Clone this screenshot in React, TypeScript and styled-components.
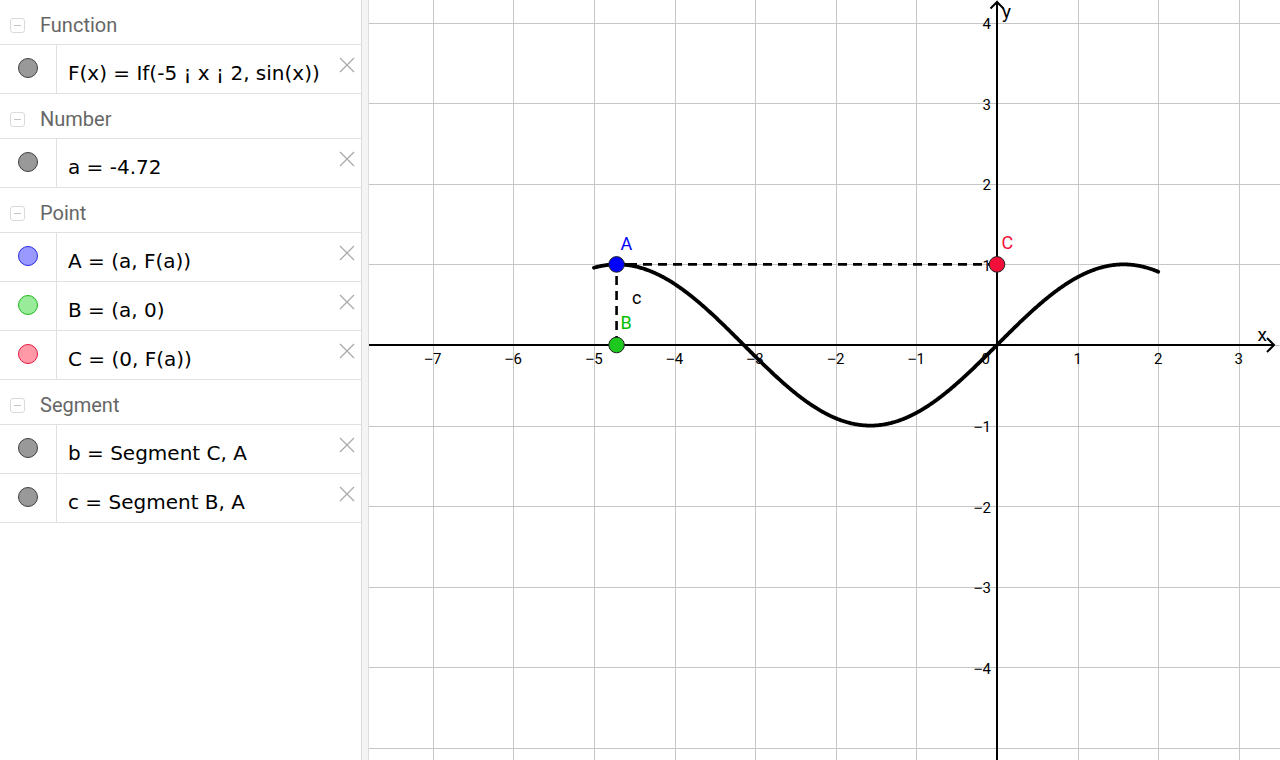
import React from "react";
import styled, { createGlobalStyle } from "styled-components";

const GlobalStyle = createGlobalStyle`
  *, *::before, *::after { box-sizing: border-box; }
  html, body { margin: 0; padding: 0; background: #fff; overflow: hidden; }
  body { font-family: Roboto, "Liberation Sans", sans-serif; }
`;

const Page = styled.div`
  display: flex;
  width: 1280px;
  height: 760px;
  background: #fff;
`;

const AlgebraPanel = styled.div`
  flex: 0 0 361px;
  display: flex;
  flex-direction: column;
  background: #fff;
`;

const Splitter = styled.div`
  flex: 0 0 8px;
  background: #f4f4f4;
  border-left: 1px solid #dcdcdc;
  border-right: 1px solid #dcdcdc;
`;

const GraphicsView = styled.div`
  flex: 1;
  overflow: hidden;
  background: #fff;
`;

const GroupHeader = styled.div`
  height: 45px;
  border-bottom: 1px solid #e0e0e0;
  display: flex;
  align-items: center;
  padding: 6px 0 0 10px;
`;

const CollapseIcon = styled.span`
  position: relative;
  width: 15px;
  height: 15px;
  border: 1px solid #dadada;
  border-radius: 3px;
  margin-right: 15px;
  &::after {
    content: "";
    position: absolute;
    left: 3px;
    right: 3px;
    top: 6px;
    height: 1.5px;
    background: #c4c4c4;
  }
`;

const GroupLabel = styled.span`
  font-family: Roboto, "Liberation Sans", sans-serif;
  font-size: 20px;
  line-height: 24px;
  color: #666;
`;

const ItemRow = styled.div`
  height: 49px;
  border-bottom: 1px solid #e0e0e0;
  display: flex;
`;

const MarbleCell = styled.div`
  flex: 0 0 57px;
  border-right: 1px solid #e0e0e0;
  padding: 13px 0 0 18px;
`;

const Marble = styled.div<{ $fill: string; $stroke: string }>`
  width: 20px;
  height: 20px;
  border-radius: 50%;
  background: ${(p) => p.$fill};
  border: 1px solid ${(p) => p.$stroke};
`;

const ItemText = styled.div`
  flex: 1;
  display: flex;
  align-items: center;
  padding: 8px 0 0 11px;
  font-family: "DejaVu Sans", "Liberation Sans", sans-serif;
  font-size: 20px;
  line-height: 24px;
  color: #000;
  white-space: nowrap;
`;

const CloseCell = styled.div`
  flex: 0 0 auto;
  padding: 12px 6px 0 0;
`;

const CloseIcon = () => (
  <svg width="16" height="16" viewBox="0 0 16 16">
    <path d="M1 1 L15 15 M15 1 L1 15" stroke="#aaa" strokeWidth="1.3" fill="none" />
  </svg>
);

type Item = { text: string; fill: string; stroke: string };
type Group = { title: string; items: Item[] };

const gray = { fill: "#999999", stroke: "#404040" };

const groups: Group[] = [
  { title: "Function", items: [{ text: "F(x) = If(-5 ¡ x ¡ 2, sin(x))", ...gray }] },
  { title: "Number", items: [{ text: "a = -4.72", ...gray }] },
  {
    title: "Point",
    items: [
      { text: "A = (a, F(a))", fill: "#9999ff", stroke: "#2a2ae0" },
      { text: "B = (a, 0)", fill: "#99ea99", stroke: "#1fb81f" },
      { text: "C = (0, F(a))", fill: "#ff99a8", stroke: "#e01a40" },
    ],
  },
  {
    title: "Segment",
    items: [
      { text: "b = Segment C, A", ...gray },
      { text: "c = Segment B, A", ...gray },
    ],
  },
];

const GW = 911;
const GH = 760;
const OX = 628;
const OY = 345;
const U = 80.6;

const px = (x: number) => OX + x * U;
const py = (y: number) => OY - y * U;
const crisp = (v: number) => Math.round(v) + 0.5;

const TickLabel = ({ n }: { n: number }) =>
  n < 0 ? (
    <>
      <tspan fontFamily="'Liberation Sans', sans-serif">{"\u2212"}</tspan>
      {Math.abs(n)}
    </>
  ) : (
    <>{n}</>
  );

const curvePath = (() => {
  const pts: string[] = [];
  for (let i = 0; i <= 700; i++) {
    const x = -5 + i * 0.01;
    pts.push(`${i === 0 ? "M" : "L"}${px(x).toFixed(2)} ${py(Math.sin(x)).toFixed(2)}`);
  }
  return pts.join(" ");
})();

const aVal = -4.72;
const A = { x: px(aVal), y: py(Math.sin(aVal)) };
const B = { x: px(aVal), y: py(0) };
const C = { x: px(0), y: py(Math.sin(aVal)) };

const Graph = () => {
  const vx: number[] = [];
  for (let k = -7; k <= 3; k++) vx.push(k);
  const hy: number[] = [];
  for (let k = -5; k <= 4; k++) hy.push(k);
  return (
    <svg width={GW} height={GH} viewBox={`0 0 ${GW} ${GH}`} style={{ display: "block" }}>
      <g stroke="#c6c6c6" strokeWidth="1" shapeRendering="crispEdges">
        {vx.map((k) => (
          <line key={"v" + k} x1={crisp(px(k))} y1={0} x2={crisp(px(k))} y2={GH} />
        ))}
        {hy.map((k) => (
          <line key={"h" + k} x1={0} y1={crisp(py(k))} x2={GW} y2={crisp(py(k))} />
        ))}
      </g>
      <g stroke="#000" strokeWidth="2" fill="none">
        <line x1={0} y1={OY} x2={905} y2={OY} />
        <polyline points={`898,338 905,345 898,352`} strokeLinejoin="miter" />
        <line x1={OX} y1={2} x2={OX} y2={GH} />
        <polyline points={`621.5,8.5 628,2 634.5,8.5`} />
      </g>
      <g fontFamily="Roboto, 'Liberation Sans', sans-serif" fontSize="15" fill="#000">
        {vx
          .filter((k) => k !== 0)
          .map((k) => (
            <text key={"tx" + k} x={px(k)} y={364} textAnchor="middle">
              <TickLabel n={k} />
            </text>
          ))}
        <text x={621} y={364} textAnchor="end">0</text>
        {hy
          .filter((k) => k !== 0 && k !== -5)
          .map((k) => (
            <text key={"ty" + k} x={622} y={py(k) + 6.5} textAnchor="end">
              <TickLabel n={k} />
            </text>
          ))}
      </g>
      <g fontFamily="Roboto, 'Liberation Sans', sans-serif" fontSize="19" fill="#000">
        <text x={888.5} y={341}>x</text>
        <text x={633} y={18}>y</text>
      </g>
      <path d={curvePath} stroke="#000" strokeWidth="3.8" fill="none" strokeLinecap="round" strokeLinejoin="round" />
      <g stroke="#000" strokeWidth="2.6" strokeDasharray="9 6" fill="none">
        <line x1={C.x} y1={C.y} x2={A.x} y2={A.y} />
        <line x1={B.x} y1={B.y} x2={A.x} y2={A.y} />
      </g>
      <g stroke="#222" strokeWidth="1">
        <circle cx={A.x} cy={A.y} r={7.8} fill="#0000ff" />
        <circle cx={B.x} cy={B.y} r={7.8} fill="#1ec81e" />
        <circle cx={C.x} cy={C.y} r={7.8} fill="#f0103a" />
      </g>
      <g fontFamily="Roboto, 'Liberation Sans', sans-serif" fontSize="18">
        <text x={251.5} y={250} fill="#0000ff">A</text>
        <text x={251.5} y={329} fill="#00c000">B</text>
        <text x={263} y={304} fill="#000">c</text>
        <text x={632.5} y={249} fill="#f0103a">C</text>
      </g>
    </svg>
  );
};

export default function App() {
  return (
    <>
      <GlobalStyle />
      <Page>
        <AlgebraPanel>
          {groups.map((g) => (
            <React.Fragment key={g.title}>
              <GroupHeader>
                <CollapseIcon />
                <GroupLabel>{g.title}</GroupLabel>
              </GroupHeader>
              {g.items.map((it) => (
                <ItemRow key={it.text}>
                  <MarbleCell>
                    <Marble $fill={it.fill} $stroke={it.stroke} />
                  </MarbleCell>
                  <ItemText>{it.text}</ItemText>
                  <CloseCell>
                    <CloseIcon />
                  </CloseCell>
                </ItemRow>
              ))}
            </React.Fragment>
          ))}
        </AlgebraPanel>
        <Splitter />
        <GraphicsView>
          <Graph />
        </GraphicsView>
      </Page>
    </>
  );
}
